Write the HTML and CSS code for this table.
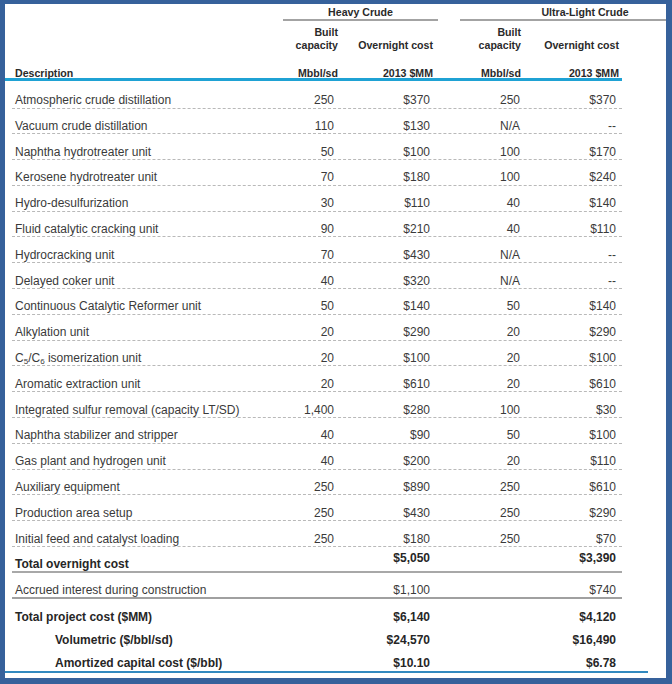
FILE: index.html
```html
<!DOCTYPE html>
<html>
<head>
<meta charset="utf-8">
<title>Refinery capital cost</title>
<link rel="stylesheet" href="styles.css">
</head>
<body>
<div class="frame">
  <div class="groups">
    <div class="grp grp-heavy">Heavy Crude</div>
    <div class="grp grp-ultra">Ultra-Light Crude</div>
  </div>
  <div class="hrow hrow-top">
    <div class="c d"></div>
    <div class="c">Built<br>capacity</div>
    <div class="c">Overnight cost</div>
    <div class="c">Built<br>capacity</div>
    <div class="c">Overnight cost</div>
  </div>
  <div class="hrow hrow-units">
    <div class="c d">Description</div>
    <div class="c">Mbbl/sd</div>
    <div class="c">2013 $MM</div>
    <div class="c">Mbbl/sd</div>
    <div class="c">2013 $MM</div>
  </div>

  <div class="row first"><div class="c d">Atmospheric crude distillation</div><div class="c">250</div><div class="c">$370</div><div class="c">250</div><div class="c">$370</div></div>
  <div class="row"><div class="c d">Vacuum crude distillation</div><div class="c">110</div><div class="c">$130</div><div class="c">N/A</div><div class="c">--</div></div>
  <div class="row"><div class="c d">Naphtha hydrotreater unit</div><div class="c">50</div><div class="c">$100</div><div class="c">100</div><div class="c">$170</div></div>
  <div class="row"><div class="c d">Kerosene hydrotreater unit</div><div class="c">70</div><div class="c">$180</div><div class="c">100</div><div class="c">$240</div></div>
  <div class="row"><div class="c d">Hydro-desulfurization</div><div class="c">30</div><div class="c">$110</div><div class="c">40</div><div class="c">$140</div></div>
  <div class="row"><div class="c d">Fluid catalytic cracking unit</div><div class="c">90</div><div class="c">$210</div><div class="c">40</div><div class="c">$110</div></div>
  <div class="row"><div class="c d">Hydrocracking unit</div><div class="c">70</div><div class="c">$430</div><div class="c">N/A</div><div class="c">--</div></div>
  <div class="row"><div class="c d">Delayed coker unit</div><div class="c">40</div><div class="c">$320</div><div class="c">N/A</div><div class="c">--</div></div>
  <div class="row"><div class="c d">Continuous Catalytic Reformer unit</div><div class="c">50</div><div class="c">$140</div><div class="c">50</div><div class="c">$140</div></div>
  <div class="row"><div class="c d">Alkylation unit</div><div class="c">20</div><div class="c">$290</div><div class="c">20</div><div class="c">$290</div></div>
  <div class="row"><div class="c d">C<sub>5</sub>/C<sub>6</sub> isomerization unit</div><div class="c">20</div><div class="c">$100</div><div class="c">20</div><div class="c">$100</div></div>
  <div class="row"><div class="c d">Aromatic extraction unit</div><div class="c">20</div><div class="c">$610</div><div class="c">20</div><div class="c">$610</div></div>
  <div class="row"><div class="c d">Integrated sulfur removal (capacity LT/SD)</div><div class="c">1,400</div><div class="c">$280</div><div class="c">100</div><div class="c">$30</div></div>
  <div class="row"><div class="c d">Naphtha stabilizer and stripper</div><div class="c">40</div><div class="c">$90</div><div class="c">50</div><div class="c">$100</div></div>
  <div class="row"><div class="c d">Gas plant and hydrogen unit</div><div class="c">40</div><div class="c">$200</div><div class="c">20</div><div class="c">$110</div></div>
  <div class="row"><div class="c d">Auxiliary equipment</div><div class="c">250</div><div class="c">$890</div><div class="c">250</div><div class="c">$610</div></div>
  <div class="row"><div class="c d">Production area setup</div><div class="c">250</div><div class="c">$430</div><div class="c">250</div><div class="c">$290</div></div>
  <div class="row"><div class="c d">Initial feed and catalyst loading</div><div class="c">250</div><div class="c">$180</div><div class="c">250</div><div class="c">$70</div></div>

  <div class="row total overnight"><div class="c d">Total overnight cost</div><div class="c"></div><div class="c up">$5,050</div><div class="c"></div><div class="c up">$3,390</div></div>
  <div class="row accrued"><div class="c d">Accrued interest during construction</div><div class="c"></div><div class="c">$1,100</div><div class="c"></div><div class="c">$740</div></div>
  <div class="row total project"><div class="c d">Total project cost ($MM)</div><div class="c"></div><div class="c">$6,140</div><div class="c"></div><div class="c">$4,120</div></div>
  <div class="row total volumetric"><div class="c d ind">Volumetric ($/bbl/sd)</div><div class="c"></div><div class="c">$24,570</div><div class="c"></div><div class="c">$16,490</div></div>
  <div class="row total amortized"><div class="c d ind">Amortized capital cost ($/bbl)</div><div class="c"></div><div class="c">$10.10</div><div class="c"></div><div class="c">$6.78</div></div>
  <div class="endline"></div>
</div>
</body>
</html>
```

FILE: styles.css
```css
html, body {
  margin: 0;
  padding: 0;
  background: #ffffff;
}

.frame {
  width: 672px;
  height: 684px;
  box-sizing: border-box;
  border-style: solid;
  border-color: #36619b;
  border-width: 4px 6px 6px 5px;
  overflow: hidden;
  background: #ffffff;
  font-family: "Liberation Sans", Arial, sans-serif;
  color: #3a3a3a;
}

.groups {
  display: flex;
  gap: 22px;
  margin-left: 278px;
  width: 800px;
  padding-top: 1px;
}

.grp {
  font-size: 10.6px;
  font-weight: bold;
  color: #2a2a2a;
  line-height: 14px;
  text-align: center;
  border-bottom: 2px solid #a3a3a3;
}

.grp-heavy { width: 155px; }
.grp-ultra { width: 250px; }

.hrow {
  display: grid;
  grid-template-columns: 276px 57px 95px 88px 98px;
  width: 614px;
  padding-right: 3px;
  font-size: 10.6px;
  font-weight: bold;
  color: #2a2a2a;
}

.hrow .c { text-align: right; }
.hrow .d { text-align: left; padding-left: 10px; }

.hrow-top {
  padding-top: 5px;
  line-height: 13px;
  align-items: end;
}

.hrow-units {
  height: 26px;
  line-height: 10px;
  align-items: end;
  border-bottom: 3px solid #1fa2d4;
}

.row {
  display: grid;
  grid-template-columns: 269px 57px 95px 88px 98px;
  width: 607px;
  padding-right: 3px;
  margin-left: 7px;
  box-sizing: content-box;
  height: 24.8px;
  border-bottom: 1px dashed #b9b9b9;
  align-items: end;
  font-size: 12px;
  line-height: 14px;
}

.row.first { height: 26.5px; }

.row .c {
  text-align: right;
  white-space: nowrap;
  padding-bottom: 0.5px;
}
.row .c:nth-child(2) { padding-right: 4px; }
.row .c:nth-child(3) { padding-right: 3px; }
.row .c:nth-child(4) { padding-right: 1px; }
.row .c:nth-child(5) { padding-right: 3px; }

.row .d {
  text-align: left;
  padding-left: 3px;
}

sub {
  font-size: 8px;
  line-height: 0;
  vertical-align: -2px;
}

.row.total {
  font-weight: bold;
  color: #262626;
}

.row.overnight {
  height: 24px;
  border-bottom: 2px solid #a8a8a8;
}
.row.overnight .up { padding-bottom: 6px; }

.row.accrued {
  height: 24px;
  border-bottom: 2px solid #a0a0a0;
}

.row.project { height: 25px; border-bottom: 0; }
.row.volumetric { height: 23px; border-bottom: 0; }
.row.amortized { height: 24px; border-bottom: 0; }
.row.amortized .c { padding-bottom: 1px; }

.row .ind { padding-left: 43px; }

.endline {
  width: 643px;
  height: 2px;
  background: #3289bf;
}
```
